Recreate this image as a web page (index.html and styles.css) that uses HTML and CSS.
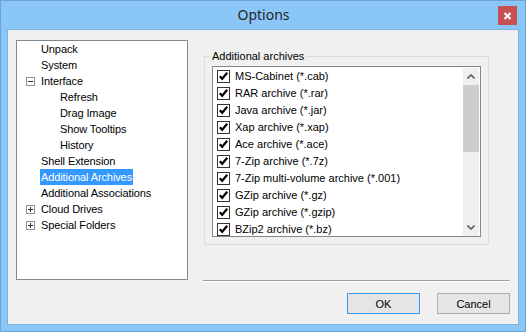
FILE: index.html
```html
<!DOCTYPE html>
<html lang="en">
<head>
    <meta charset="UTF-8">
    <meta name="viewport" content="width=device-width, initial-scale=1.0">
    <title>Options</title>
    <link rel="stylesheet" href="styles.css">
</head>
<body>

<div class="window">
    <div class="titlebar">
        <span class="title">Options</span>
        <button type="button" class="close" aria-label="Close">
            <svg width="9" height="8" viewBox="0 0 9 8"><path d="M1.5 1 L7.5 7 M7.5 1 L1.5 7" stroke="#fff" stroke-width="2"/></svg>
        </button>
    </div>

    <div class="client">
        <div class="main">
            <div class="tree">
                <div class="node"><span class="label">Unpack</span></div>
                <div class="node"><span class="label">System</span></div>
                <div class="node has-toggle"><span class="toggle minus"></span><span class="label">Interface</span></div>
                <div class="node child"><span class="label">Refresh</span></div>
                <div class="node child"><span class="label">Drag Image</span></div>
                <div class="node child"><span class="label">Show Tooltips</span></div>
                <div class="node child"><span class="label">History</span></div>
                <div class="node"><span class="label">Shell Extension</span></div>
                <div class="node"><span class="label selected">Additional Archives</span></div>
                <div class="node"><span class="label">Additional Associations</span></div>
                <div class="node has-toggle"><span class="toggle plus"></span><span class="label">Cloud Drives</span></div>
                <div class="node has-toggle"><span class="toggle plus"></span><span class="label">Special Folders</span></div>
            </div>

            <div class="page">
                <div class="group">
                    <span class="group-label">Additional archives</span>
                    <div class="listbox">
                        <div class="items">
                            <div class="item"><span class="check"></span>MS-Cabinet (*.cab)</div>
                            <div class="item"><span class="check"></span>RAR archive (*.rar)</div>
                            <div class="item"><span class="check"></span>Java archive (*.jar)</div>
                            <div class="item"><span class="check"></span>Xap archive (*.xap)</div>
                            <div class="item"><span class="check"></span>Ace archive (*.ace)</div>
                            <div class="item"><span class="check"></span>7-Zip archive (*.7z)</div>
                            <div class="item"><span class="check"></span>7-Zip multi-volume archive (*.001)</div>
                            <div class="item"><span class="check"></span>GZip archive (*.gz)</div>
                            <div class="item"><span class="check"></span>GZip archive (*.gzip)</div>
                            <div class="item"><span class="check"></span>BZip2 archive (*.bz)</div>
                        </div>
                        <div class="scrollbar">
                            <div class="arrow">
                                <svg width="8" height="5" viewBox="0 0 8 5"><polyline points="0.5,4.5 4,1 7.5,4.5" fill="none" stroke="#606060" stroke-width="1.6"/></svg>
                            </div>
                            <div class="track"><div class="thumb"></div></div>
                            <div class="arrow">
                                <svg width="8" height="5" viewBox="0 0 8 5"><polyline points="0.5,0.5 4,4 7.5,0.5" fill="none" stroke="#606060" stroke-width="1.6"/></svg>
                            </div>
                        </div>
                    </div>
                </div>
            </div>
        </div>

        <div class="buttons">
            <button type="button" class="btn default">OK</button>
            <button type="button" class="btn">Cancel</button>
        </div>
    </div>
</div>

</body>
</html>
```

FILE: styles.css
```css
body {
    margin: 0;
    font-family: "Liberation Sans", Arial, sans-serif;
    font-size: 11px;
    color: #000;
}

.window {
    width: 526px;
    height: 332px;
    box-sizing: border-box;
    border: 1px solid #6fa3d6;
    background-color: #8bc6f8;
    padding: 0 6px 6px 6px;
    display: flex;
    flex-direction: column;
}

.titlebar {
    height: 28px;
    display: grid;
    grid-template-columns: 1fr auto 1fr;
    align-items: start;
}

.title {
    grid-column: 2;
    font-family: "Noto Sans", sans-serif;
    font-size: 14px;
    line-height: 28px;
    color: #252525;
    margin-left: 1px;
}

.close {
    grid-column: 3;
    justify-self: end;
    width: 19px;
    height: 19px;
    margin: 5px 2px 0 0;
    padding: 0;
    border: none;
    background-color: #c75050;
    display: flex;
    align-items: center;
    justify-content: center;
}

.client {
    flex: 1;
    border: 1px solid #7fb0de;
    background-color: #f0f0f0;
    padding: 10px 8px 0 8px;
    display: flex;
    flex-direction: column;
}

.main {
    display: flex;
    gap: 15px;
}

/* navigation tree */
.tree {
    width: 172px;
    height: 240px;
    box-sizing: border-box;
    border: 1px solid #828790;
    background-color: #fff;
}

.node {
    height: 16px;
    display: flex;
    align-items: center;
    padding-left: 23px;
    white-space: nowrap;
}

.node.child {
    padding-left: 42px;
}

.node.has-toggle {
    padding-left: 9px;
}

.label {
    padding: 0 1px;
    line-height: 16px;
    letter-spacing: -0.1px;
}

.label.selected {
    background-color: #3399ff;
    color: #fff;
}

.toggle {
    width: 9px;
    height: 9px;
    box-sizing: border-box;
    border: 1px solid #919191;
    margin-right: 5px;
    position: relative;
    background-color: #fff;
}

.toggle::before,
.toggle.plus::after {
    content: "";
    position: absolute;
    background-color: #333;
}

.toggle::before {
    left: 1px;
    top: 3px;
    width: 5px;
    height: 1px;
}

.toggle.plus::after {
    left: 3px;
    top: 1px;
    width: 1px;
    height: 5px;
}

/* right page */
.page {
    width: 307px;
    height: 240px;
    border-bottom: 1px solid #a0a0a0;
    box-shadow: 0 1px 0 #fff;
}

.group {
    width: 285px;
    height: 189px;
    box-sizing: border-box;
    margin: 16px 0 0 1px;
    border: 1px solid #dcdcdc;
}

.group-label {
    display: block;
    width: fit-content;
    margin: -7px 0 0 5px;
    padding: 0 2px;
    line-height: 13px;
    background-color: #f0f0f0;
}

.listbox {
    width: 269px;
    height: 171px;
    box-sizing: border-box;
    margin: 3px 0 0 7px;
    border: 1px solid #828790;
    background-color: #fff;
    display: flex;
    overflow: hidden;
}

.items {
    flex: 1;
    min-width: 0;
}

.item {
    height: 17px;
    display: flex;
    align-items: center;
    white-space: nowrap;
}

.check {
    width: 13px;
    height: 13px;
    box-sizing: border-box;
    border: 1px solid #333;
    margin: 1px 5px 0 4px;
    flex-shrink: 0;
    background: #fff url("data:image/svg+xml;utf8,<svg xmlns='http://www.w3.org/2000/svg' width='11' height='11' viewBox='0 0 11 11'><polyline points='1.8,5.2 4.2,7.8 9.2,1.8' fill='none' stroke='black' stroke-width='2.2'/></svg>") no-repeat center;
}

.scrollbar {
    width: 16px;
    margin: 1px 1px 0 0;
    background-color: #f0f0f0;
    display: flex;
    flex-direction: column;
}

.arrow {
    height: 17px;
    display: flex;
    align-items: center;
    justify-content: center;
}

.track {
    flex: 1;
}

.thumb {
    height: 67px;
    background-color: #cdcdcd;
}

/* dialog buttons */
.buttons {
    display: flex;
    justify-content: flex-end;
    gap: 17px;
    margin-top: 12px;
}

.btn {
    width: 73px;
    height: 21px;
    padding: 0;
    font-family: "Liberation Sans", Arial, sans-serif;
    font-size: 11px;
    color: #000;
    background-color: #e5e5e5;
    border: 1px solid #acacac;
}

.btn.default {
    border-color: #3399ff;
}
```
